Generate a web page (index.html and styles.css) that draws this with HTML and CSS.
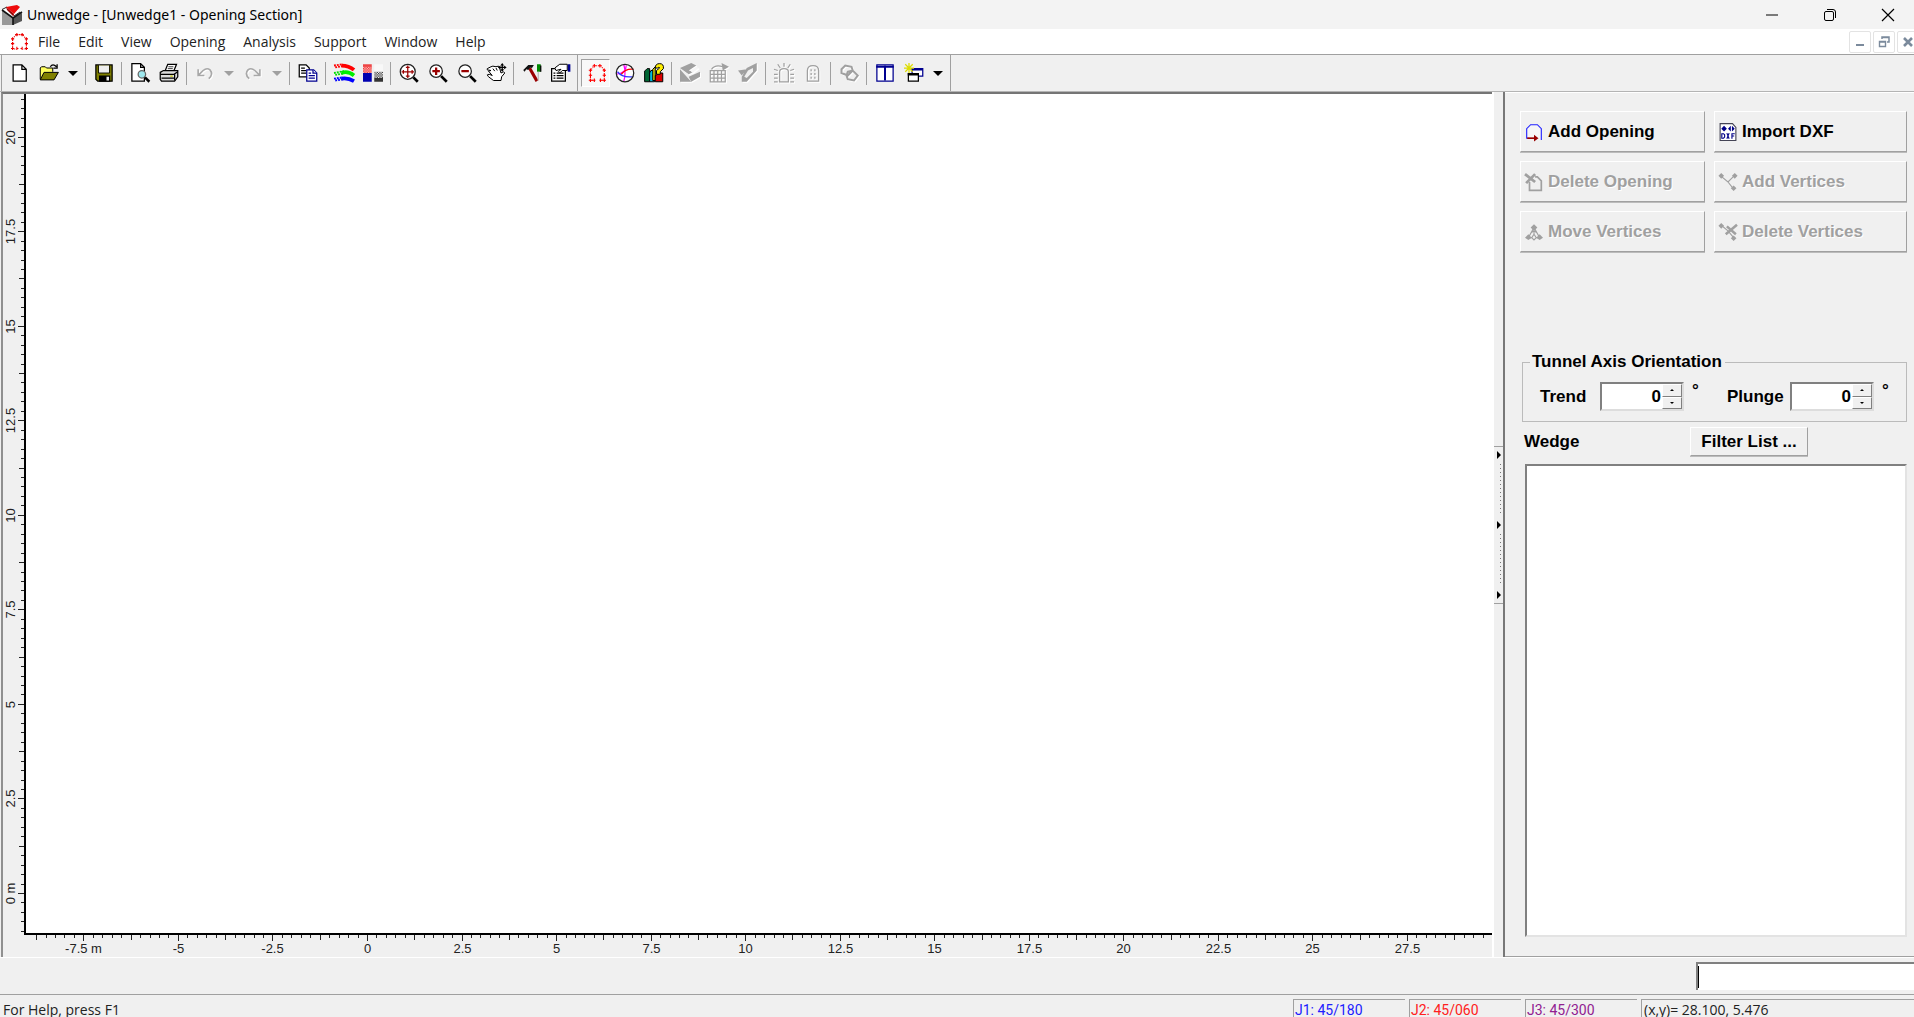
FILE: index.html
```html
<!DOCTYPE html>
<html lang="en">
<head>
<meta charset="utf-8">
<title>Unwedge - [Unwedge1 - Opening Section]</title>
<link rel="stylesheet" href="styles.css">
</head>
<body>
<header class="titlebar">
  <svg class="app-icon" viewBox="0 0 20 20"><path d="M0 5l11 8v7H0z" fill="#999"/><path d="M11 13l9-5v8l-9 4z" fill="#555"/><path d="M0 4l6-3 13 5-8 7z" fill="#fff"/><path d="M0 5l11 8 9-6M11 13v7" fill="none" stroke="#111" stroke-width="1.600"/><path d="M0 4.500l5-2.500M12 11l6-4" stroke="#222"/><path d="M4 2L15 0l3 2-6 7z" fill="#ee0a0a"/><path d="M4 2l8 7-.5 2.500L5 5z" fill="#900"/></svg>
  <h1 class="title">Unwedge - [Unwedge1 - Opening Section]</h1>
  <div class="window-buttons">
    <button aria-label="Minimize"><svg viewBox="0 0 12 12"><path d="M0 6h12" stroke="#000"/></svg></button>
    <button aria-label="Restore"><svg viewBox="0 0 12 12" fill="none" stroke="#000"><rect x=".5" y="2.500" width="9" height="9" rx="1.500"/><path d="M3 .5h6a2.500 2.500 0 0 1 2.500 2.500v6"/></svg></button>
    <button aria-label="Close"><svg viewBox="0 0 12 12"><path d="M0 0l12 12M12 0L0 12" stroke="#000" stroke-width="1.200"/></svg></button>
  </div>
</header>

<nav class="menubar">
  <svg class="doc-icon" viewBox="0 0 16 16"><g fill="none" stroke="#e00" stroke-width="1"><path d="M4 15H1.500V6L4.500 1.500h6.500L14.500 6v9H12" stroke-dasharray="1 1"/></g><path d="M4 1.500h3M9 1.500h3M5.500 0v3M10.500 0v3M0 5.500h3M1.500 4v3M13 5.500h3M14.500 4v3M0 10h3M1.500 8.500v3M13 10h3M14.500 8.500v3M0 14.500h3M1.500 13v3M13 14.500h3M14.500 13v3M5 14.500h2M9 14.500h2M10.500 13v3M5.500 13v3" stroke="#e00"/></svg>
  <button>File</button><button>Edit</button><button>View</button><button>Opening</button><button>Analysis</button><button>Support</button><button>Window</button><button>Help</button>
  <div class="mdi-buttons">
    <button aria-label="Minimize document"><svg viewBox="0 0 12 12"><path d="M2 9h8" stroke="#7b8a9c" stroke-width="2"/></svg></button>
    <button aria-label="Restore document"><svg viewBox="0 0 12 12" fill="none" stroke="#7b8a9c"><path d="M4 3V1h7v5H9M4 1.500h7" stroke-width="1.500"/><path d="M1.500 5.500h6v5h-6zM1 6h7" stroke-width="1.400"/></svg></button>
    <button aria-label="Close document"><svg viewBox="0 0 12 12"><path d="M2 2l8 8M10 2l-8 8" stroke="#7b8a9c" stroke-width="2.600"/></svg></button>
  </div>
</nav>

<div class="toolbars">
  <div class="toolbar">
    <button class="tool" aria-label="New"><svg viewBox="0 0 16 16"><path d="M2.500 1.500h7l3.500 3.500v9.500H2.500zM9.500 1.500V5H13" fill="#fff" stroke="#000"/></svg></button>
    <button class="tool" aria-label="Open"><svg viewBox="0 0 16 16"><path d="M1 13V4l1-1h3l1 1h5v3" fill="#ffff60" stroke="#000" stroke-width=".8"/><path d="M1 13.500L4 7.500h11.500L12 13.500z" fill="#808000" stroke="#000" stroke-width=".8"/><path d="M9 3q2-3 5 0M14.500 1v3h-3" fill="none" stroke="#000"/></svg></button>
    <button class="drop" aria-label="Recent files"></button>
    <i class="sep"></i>
    <button class="tool" aria-label="Save"><svg viewBox="0 0 16 16"><path d="M1.500 1.500h13v13H3L1.500 13z" fill="#808000" stroke="#000"/><path d="M4 2h8v6H4z" fill="#eee"/><path d="M4 10h9v5H4z" fill="#000"/><path d="M10 11h2v3h-2z" fill="#eee"/><path d="M3.500 2v6h9V2" fill="none" stroke="#000" stroke-width=".7"/></svg></button>
    <i class="sep"></i>
    <button class="tool" aria-label="Print preview"><svg viewBox="0 0 16 16"><path d="M1.500 .5h7l3 3v11h-10zM8.500 .5v3h3" fill="#fff" stroke="#000"/><circle cx="9.500" cy="9" r="3" fill="#9ee8ee" stroke="#666"/><path d="M12 11.500l3.500 3.500" stroke="#000" stroke-width="2"/></svg></button>
    <button class="tool" aria-label="Print"><svg viewBox="0 0 16 16"><path d="M5 6l2-5h7l-2 5" fill="#fff" stroke="#000"/><path d="M7.500 3h4M7 4.500h4" stroke="#000" stroke-width=".6"/><path d="M1 7.500L3.500 6H15v5l-2.500 3.500H2L1 13z" fill="#ddd" stroke="#000"/><path d="M1 9h11l3-2M12.500 9v5M2 12h10" fill="none" stroke="#000"/><path d="M9 10.500h2" stroke="#cc0"/></svg></button>
    <i class="sep"></i>
    <button class="tool" aria-label="Undo" disabled><svg viewBox="0 0 16 16" fill="none" stroke="#a8a8a8"><path d="M2.500 5v5h5M3 9.500L6.500 6q3-2.500 5.500-.5 3 3.500-1 7" stroke-width="1.300"/></svg></button>
    <button class="drop off" aria-label="Undo list" disabled></button>
    <button class="tool" aria-label="Redo" disabled><svg viewBox="0 0 16 16" fill="none" stroke="#a8a8a8"><path d="M13.500 5v5h-5M13 9.500L9.500 6Q6.500 3.500 4 5.500q-3 3.500 1 7" stroke-width="1.300"/></svg></button>
    <button class="drop off" aria-label="Redo list" disabled></button>
    <i class="sep"></i>
    <button class="tool" aria-label="Copy"><svg viewBox="0 0 16 16" fill="#fff"><path d="M1 1.500h5.500L9 4v7H1z" stroke="#000"/><path d="M2.500 4h3M2.500 6h4M2.500 8h4" stroke="#000"/><path d="M7 5.500h5.500L15 8v6.500H7z" stroke="#000090"/><path d="M12 5.500V8h3M8.500 8h2M8.500 10h5M8.500 12h5" stroke="#000090"/></svg></button>
    <i class="sep"></i>
    <button class="tool" aria-label="Contours"><svg viewBox="0 0 16 16" fill="none" stroke-width="3"><path d="M6 2q6 0 10 3.500" stroke="red"/><path d="M6 8q5-2 10 2" stroke="#0e0"/><path d="M6 12.500q5-1 10 2" stroke="#00f"/><g stroke-width="1.500" stroke-dasharray="1.500 .8"><path d="M0 2l7-1M1 3.500l6-1" stroke="red"/><path d="M0 8l8-1.500M1 9.500l6-1" stroke="#0d0"/><path d="M0 12.500l7-1M1 14l6-1" stroke="#00f"/></g></svg></button>
    <button class="tool" aria-label="Display colors"><svg viewBox="0 0 16 16"><defs><pattern id="rb" width="2" height="2" patternUnits="userSpaceOnUse"><path fill="#e33" d="M0 0h2v2H0z"/><path fill="#fbb" d="M1 0h1v1H1zM0 1h1v1H0z"/></pattern><pattern id="bw" width="2" height="2" patternUnits="userSpaceOnUse"><path fill="#fff" d="M0 0h2v2H0z"/><path fill="#333" d="M0 0h1v1H0zM1 1h1v1H1z"/></pattern></defs><path fill="#e44" d="M0 1h7v3H0z"/><path fill="url(#rb)" d="M0 3h7v5H0z"/><path fill="#0000b0" d="M0 8h7v7H0z"/><path fill="#f8f8f8" d="M9 1h7v6H9z"/><path fill="url(#bw)" d="M9 7h7v5H9z"/><path fill="#333" d="M9 12h7v3H9z"/></svg></button>
    <i class="sep"></i>
    <button class="tool" aria-label="Zoom all"><svg viewBox="0 0 16 16"><circle cx="7" cy="7" r="6" fill="#fff" stroke="#222"/><path d="M2 7h10M7 2v10M3.500 5.500v3M10.500 5.500v3M5.500 3.500h3M5.500 10.500h3" stroke="#900"/><path d="M11.500 11.500L15 15" stroke="#000" stroke-width="2.200"/></svg></button>
    <button class="tool" aria-label="Zoom in"><svg viewBox="0 0 16 16"><circle cx="6.500" cy="6.500" r="5" fill="#fff" stroke="#222"/><path d="M3.500 6.500h6M6.500 3.500v6" stroke="#900" stroke-width="1.800"/><path d="M10.500 10.500L15 15" stroke="#000" stroke-width="2.200"/></svg></button>
    <button class="tool" aria-label="Zoom out"><svg viewBox="0 0 16 16"><circle cx="6.500" cy="6.500" r="5" fill="#fff" stroke="#222"/><path d="M3.500 6.500h6" stroke="#900" stroke-width="1.800"/><path d="M10.500 10.500L15 15" stroke="#000" stroke-width="2.200"/></svg></button>
    <button class="tool" aria-label="Pan"><svg viewBox="0 0 16 16"><path d="M1 4.500l3-1.500 1.500-.5L8 3l2-.5 1 2L12 8l2-1 1 1-2.500 3-.5 3H6l-4-3-1-1.500 1.500-.5L5 10 2 6.500l2-.5-3-.5z" fill="#fff" stroke="#000" stroke-width=".8"/><path d="M5.500 4.500l1.500 2M8 4l1 2" stroke="#000" stroke-width=".8"/><path d="M13 1v5M10.500 3.500h5" stroke="#000"/><path d="M13 0l1.500 2h-3zM13 7l1.500-2h-3zM16.500 3.500l-2-1.500v3zM9.500 3.500l2-1.500v3z"/></svg></button>
    <i class="sep"></i>
    <button class="tool" aria-label="Project settings"><svg viewBox="0 0 16 16"><path d="M6 4l6 10.500" stroke="#900" stroke-width="2.500"/><path d="M1 5.500L5 1.500h4.500L8 4 6.500 3.500 5 5.500 3.500 5 2 7z" fill="#111"/><path d="M13.500 1v6" stroke="#080" stroke-width="3"/><path d="M13 7v7" stroke="#bbb"/><path d="M15 2v5" stroke="#000"/></svg></button>
    <button class="tool" aria-label="Properties"><svg viewBox="0 0 16 16"><path d="M.5 4.500h11v10H.5z" fill="#fff" stroke="#000"/><path d="M2 8h1.500M4.500 8H10M2 10h1.500M4.500 10H10M2 12h1.500M4.500 12H10" stroke="#000"/><path d="M3 4l4-3h6v5H9L7 8 6 7l2-2-4 1z" fill="#fff" stroke="#000" stroke-width=".8"/><path d="M14.500 1v6" stroke="#000090" stroke-width="2"/></svg></button>
  </div>
  <div class="toolbar">
    <button class="tool pressed" aria-label="Opening section view"><svg viewBox="-2 -1 18 18"><path d="M4 14.500H2V6L5 1.500h6.500L14.500 6v8.500H12" fill="none" stroke="red" stroke-dasharray="1 1"/><path d="M4 1.500h3M9 1.500h3M5.500 0v3M10.500 0v3M.5 5.500h3M2 4v3M13 5.500h3M14.500 4v3M.5 10h3M2 8.500v3M13 10h3M14.500 8.500v3M.5 14.500h6M2 13v3M10 14.500h6M14.500 13v3M5.500 13v3M11 13v3" stroke="red"/></svg></button>
    <button class="tool" aria-label="Stereonet view"><svg viewBox="0 0 16 16"><circle cx="8" cy="8" r="7" fill="#fff"/><path d="M7 1q2 7 0 14M1 9q8-1 8-7" fill="none" stroke="#f0f"/><path d="M15 5Q9 4 5 9" fill="none" stroke="red"/><path d="M2 7q4 5 12 4" fill="none" stroke="#33f"/><circle cx="8" cy="8" r="7" fill="none" stroke="#222"/></svg></button>
    <button class="tool" aria-label="Info viewer"><svg viewBox="0 0 16 16" stroke="#000" stroke-width=".8"><path d="M.5 6.500l2-2h2V15h-4z" fill="#063"/><path d="M4.500 8l1-2h3v9h-4z" fill="#0bd"/><path d="M7 5l2-2v11H7z" fill="#dd0"/><path d="M9 10l4-2h2v7H9z" fill="#d00"/><path d="M9 4q0-3.500 3.500-3.500t3 4L13 7v2h-3V6l2.500-2q-.5-1.500-1.500 0z" fill="#fe0"/></svg></button>
    <i class="sep"></i>
    <button class="tool" aria-label="3D wedge view" disabled><svg viewBox="0 0 16 16" class="dim"><path d="M0 5l9 10H0zM0 4l9-4 4 2-6 4 4 1-4 2zM7 11l9-4v4l-7 4z"/><path d="M8 6l5-3 2 1-5 4z" fill="#f6f6f6"/></svg></button>
    <button class="tool" aria-label="Multi perspective" disabled><svg viewBox="0 0 16 16" class="dim"><path d="M1 6h12v9H1z" fill="none" stroke="#a0a0a0"/><path d="M1 9h12M1 12h12M4 6v9M7 6v9M10 6v9M2 5q3-4 9-2" fill="none" stroke="#a0a0a0"/><path d="M10 0l6 3-5 3z"/></svg></button>
    <button class="tool" aria-label="Perimeter support" disabled><svg viewBox="0 0 16 16" class="dim"><path d="M7 4l8-4v6l-8 9H3V11zM0 6l7-1-4 5z"/><path d="M8 6l4-2v3l-5 5-2-1z" fill="#f0f0f0"/></svg></button>
    <i class="sep"></i>
    <button class="tool" aria-label="Add bolts" disabled><svg viewBox="0 0 16 16" fill="none" stroke="#a0a0a0"><path d="M4.500 15V7q0-2.500 3.500-2.500T11.500 7v8zM8 0v3M3 1l2 3M13 1l-2 3M0 5l3 1M16 5l-3 1M0 9h3M13 9h3M0 12h3M13 12h3M0 15h3M13 15h3"/></svg></button>
    <button class="tool" aria-label="Add shotcrete" disabled><svg viewBox="0 0 16 16" fill="none" stroke="#a0a0a0"><path d="M3.500 14.500V6q0-4 4.500-4t4.500 4v8.500z"/><path d="M6.500 5v9M9.500 5v9" stroke-dasharray="1.500 1.500"/></svg></button>
    <i class="sep"></i>
    <button class="tool" aria-label="Compute" disabled><svg viewBox="0 0 16 16" fill="none" stroke="#a0a0a0" stroke-width="1.600"><path d="M2 5l3-3 5 1 1 3-4 4-5-2zM7 7l4-1 4 4-3 4-5-1-1-3z"/></svg></button>
    <i class="sep"></i>
    <button class="tool" aria-label="Tile windows"><svg viewBox="0 0 16 16"><path d="M1.500 1.500h13v13h-13z" fill="#fff" stroke="#000090"/><path d="M1 3h14M8 2v12" stroke="#000090" stroke-width="1.600"/></svg></button>
    <button class="tool" aria-label="New window"><svg viewBox="0 0 16 16"><path d="M6.500 4.500H15v6H6.500z" fill="#fff" stroke="#000090"/><path d="M6 5h9" stroke="#000090" stroke-width="2"/><path d="M3.500 8.500h8v6h-8z" fill="#fff" stroke="#000"/><path d="M3 9h9" stroke="#000" stroke-width="2"/><path d="M4 0v8M0 4h8M1 1l6 6M7 1L1 7" stroke="#dd0"/></svg></button>
    <button class="drop" aria-label="Window list"></button>
  </div>
</div>

<main class="workspace">
  <section class="document" aria-label="Opening Section">
    <svg class="ruler-y" id="ruler-y"></svg>
    <div class="canvas"></div>
    <svg class="ruler-x" id="ruler-x"></svg>
  </section>
  <div class="splitter">
    <div class="grip"><b></b><i></i><b></b><i></i><b></b></div>
  </div>
  <aside class="panel">
    <div class="actions">
      <button><svg viewBox="0 0 16 16"><path d="M3 13.500H1.500V5L5 1.500h6L14.500 5v10" fill="#f6f6f6" stroke="#22f"/><path d="M2 13.500h7" stroke="#900" stroke-width="1.500"/><path d="M8 10.500l4 3-4 3z" fill="#900"/></svg>Add Opening</button>
      <button><svg viewBox="0 0 16 16"><path d="M1 .5h11L15 4v11.500H1z" fill="#fff" stroke="#445"/><path d="M2 5l2.500-2.500v5zM14 5l-2.500-2.500v5zM7 5L4.500 2.500v5zM8 5l2.500-2.500v5z" fill="#008"/><path d="M2.500 9.500v4h1.500l1-1v-2l-1-1zM7 9l2 5M9 9l-2 5M11.500 14V9.500H14M11.500 11.500h2" fill="none" stroke="#008"/></svg>Import DXF</button>
      <button disabled><svg viewBox="0 0 16 16" fill="none" stroke="#a0a0a0"><path d="M4 8v7.500h10.500V7L11 3.500H9" stroke-width="1.500"/><path d="M0 1l9 7M9 1L1 9" stroke-width="2.500"/></svg>Delete Opening</button>
      <button disabled><svg viewBox="0 0 16 16" class="dim"><path d="M2 3l6 5 5-5M8 8l4 5" fill="none" stroke="#a0a0a0"/><path d="M2 0l2.500 2.500L2 5-.5 2.500zM14 0l2.500 2.500L14 5l-2.500-2.500zM13 11l2.500 2.500L13 16l-2.500-2.500z"/></svg>Add Vertices</button>
      <button disabled><svg viewBox="0 0 16 16" class="dim"><path d="M8 4L3 13M8 4l5 9M8 4v7M5 9l3-2 3 2M3 13h3M10 13h3M8 10l2 3-2 2-2-2z" fill="none" stroke="#a0a0a0"/><path d="M8 1l3 3-3 3-3-3zM3 10l3 3-3 2-3-2zM13 10l3 3-3 2-3-2z"/></svg>Move Vertices</button>
      <button disabled><svg viewBox="0 0 16 16" class="dim"><path d="M2 2l6 5 5 6" fill="none" stroke="#a0a0a0"/><path d="M7 3l8 7M16 1.500L6 10" fill="none" stroke="#a0a0a0" stroke-width="2.200"/><path d="M2 0l2.500 2.500L2 5-.5 2.500zM13 11l2.500 2.500L13 16l-2.500-2.500z"/></svg>Delete Vertices</button>
    </div>
    <fieldset class="orientation">
      <legend>Tunnel Axis Orientation</legend>
      <label for="trend">Trend</label>
      <div class="spin"><input id="trend" value="0"><div><button aria-label="Increase trend"></button><button class="down" aria-label="Decrease trend"></button></div></div>
      <span class="deg">°</span>
      <label for="plunge">Plunge</label>
      <div class="spin"><input id="plunge" value="0"><div><button aria-label="Increase plunge"></button><button class="down" aria-label="Decrease plunge"></button></div></div>
      <span class="deg">°</span>
    </fieldset>
    <div class="wedge-head"><label for="wedges">Wedge</label><button>Filter List ...</button></div>
    <select class="wedges" id="wedges" multiple></select>
  </aside>
</main>

<div class="command"><div class="prompt"><input aria-label="Command prompt" autofocus></div></div>

<footer class="status">
  <span class="help">For Help, press F1</span>
  <span class="pane joint j1">J1: 45/180</span>
  <span class="pane joint j2">J2: 45/060</span>
  <span class="pane joint j3">J3: 45/300</span>
  <span class="pane coords">(x,y)= 28.100, 5.476</span>
</footer>
<script src="rulers.js"></script>
</body>
</html>
```

FILE: styles.css
```css
* { box-sizing: border-box; }
html, body { height: 100%; }
body {
  margin: 0;
  display: grid;
  grid-template-rows: 29px 25px 38px minmax(0, 1fr) 36px 23px;
  overflow: hidden;
  background: #f0f0f0;
  color: #000;
  font: 14px/20px "Open Sans", "Noto Sans", sans-serif;
}
button {
  margin: 0;
  padding: 0;
  border: 0;
  background: none;
  color: inherit;
  font: inherit;
}
svg { display: block; overflow: visible; }

.titlebar { display: flex; align-items: center; padding-left: 2px; background: #f3f3f3; }
.app-icon { width: 20px; height: 20px; }
.title { margin: 0 auto 0 5px; font: 14px/20px "Noto Sans", sans-serif; }
.window-buttons { display: flex; margin-right: -3px; }
.window-buttons button { width: 58px; height: 29px; display: grid; place-items: center; }
.window-buttons svg { width: 12px; height: 12px; }

.menubar { display: flex; align-items: center; padding-left: 11px; background: #fff; color: #222; }
.doc-icon { width: 17px; height: 17px; margin-right: 1px; }
.menubar > button { padding: 0 9px; }
.mdi-buttons { display: flex; gap: 2px; margin: 0 -5px 0 auto; }
.mdi-buttons button { width: 22px; height: 22px; display: grid; place-items: center; border: 1px solid #e3e3e3; border-radius: 2px; }
.mdi-buttons svg { width: 12px; height: 12px; }

.toolbars { display: flex; border-top: 1px solid #a0a0a0; border-bottom: 1px solid #b4b4b4; }
.toolbar { display: flex; align-items: center; padding: 0 3px; border-right: 1px solid #a0a0a0; }
.toolbar:first-child { margin-left: 1px; padding-right: 2px; border-left: 1px solid #a0a0a0; }
.tool { width: 29px; height: 28px; display: grid; place-items: center; border: 1px solid transparent; }
.tool svg { width: 20px; height: 20px; }
.pressed { border-color: #a0a0a0 #fff #fff #a0a0a0; background: #f8f8f8; }
.dim { fill: #a0a0a0; }
.tool:disabled svg { filter: drop-shadow(1px 1px 0 #fff); }
.sep { width: 1px; height: 23px; margin: 0 3px; background: #a0a0a0; }
.drop { width: 19px; height: 28px; display: grid; place-items: center; }
.drop::before { content: ""; border: 5px solid transparent; border-top-color: #000; border-bottom: 0; }
.off::before { border-top-color: #a0a0a0; }

.workspace { display: flex; min-height: 0; border-bottom: 1px solid #fff; }
.document {
  flex: 1;
  min-width: 0;
  display: grid;
  grid-template: minmax(0, 1fr) 22px / 21px minmax(0, 1fr);
  margin-left: 1px;
  border-top: 2px solid #757575;
  border-left: 2px solid #909090;
}
.canvas { background: #fff; border-left: 2px solid #000; border-bottom: 2px solid #000; }
.ruler-y { width: 21px; height: 100%; }
.ruler-x { grid-column: 2; width: 100%; height: 22px; overflow: hidden; }
.ruler-y path, .ruler-x path { stroke: #222; fill: none; shape-rendering: crispEdges; }
.ruler-y text, .ruler-x text { font: 13px "Liberation Sans", sans-serif; fill: #222; text-anchor: middle; }

.splitter { width: 13px; display: flex; align-items: center; border-left: 2px solid #fff; border-right: 2px solid #787878; }
.grip { width: 100%; height: 158px; display: flex; flex-direction: column; align-items: center; justify-content: space-between; padding: 4px 0; border-top: 1px solid #a0a0a0; border-bottom: 1px solid #a0a0a0; }
.grip b { border: 4px solid transparent; border-left-color: #000; border-right: 0; }
.grip i { width: 1px; height: 52px; margin-left: 3px; background: repeating-linear-gradient(#777 0 1px, transparent 1px 4px); }

.panel {
  width: 409px;
  display: flex;
  flex-direction: column;
  padding: 18px 7px 19px 15px;
  border-top: 1px solid #fff;
  border-bottom: 1px solid #a0a0a0;
  font: bold 17px/20px "Liberation Sans", sans-serif;
}
.actions { display: grid; grid-template-columns: 185fr 193fr; gap: 9px; }
.actions button, .wedge-head button { border: 1px solid; border-color: #fff #a0a0a0 #a0a0a0 #fff; box-shadow: 0 1px #bbb; }
.actions button { height: 41px; display: flex; align-items: center; gap: 5px; padding-left: 4px; }
.actions svg { width: 18px; height: 18px; }
.actions button:disabled { color: #a0a0a0; text-shadow: 1px 1px #fff; }

.orientation {
  height: 70px;
  margin: 100px 0 0 2px;
  padding: 0 0 0 17px;
  display: flex;
  border: 1px solid #bbb;
}
.orientation legend { margin-left: -10px; padding: 0 3px 0 2px; }
.orientation label { width: 60px; padding-top: 15px; }
.orientation label ~ label { width: 63px; }
.spin { width: 84px; height: 29px; display: flex; margin-top: 10px; background: #fff; border: 2px solid; border-color: #808080 #ddd #ddd #808080; }
.spin input { width: 60px; padding: 0 1px 0 0; border: 0; background: none; font: inherit; text-align: right; outline: 0; }
.spin div { width: 20px; display: grid; grid-template-rows: 1fr 1fr; }
.spin button { display: grid; place-items: center; background: #f0f0f0; border: 1px solid; border-color: #fff #808080 #808080 #fff; }
.spin button::before { content: ""; border: 2px solid transparent; border-bottom-color: #000; border-top: 0; }
.spin .down::before { border: 2px solid transparent; border-top-color: #000; border-bottom: 0; }
.deg { width: 43px; padding: 9px 0 0 8px; }
.deg:last-child { width: 20px; }

.wedge-head { display: flex; justify-content: space-between; padding: 5px 99px 0 4px; }
.wedge-head label { padding-top: 5px; }
.wedge-head button { width: 118px; height: 29px; }
.wedges { flex: 1; min-height: 0; width: auto; margin: 8px 0 0 5px; background: #fff; border: 2px solid; border-color: #808080 #e3e3e3 #e3e3e3 #808080; border-radius: 0; outline: 0; }

.command { display: flex; justify-content: flex-end; padding-top: 4px; }
.prompt { width: 218px; height: 28px; background: #fff; border: solid #808080; border-width: 2px 0 0 2px; }
.prompt input { width: 100%; height: 22px; margin-top: 2px; padding: 0; border: 0; border-left: 1px solid #000; outline: 0; caret-color: transparent; font: inherit; }

.status { display: flex; gap: 4px; height: 28px; padding-top: 4px; border-top: 1px solid #a0a0a0; color: #222; }
.help { flex: 1; padding-left: 3px; line-height: 22px; }
.pane { width: 112px; padding-left: 1px; border-top: 1px solid #a0a0a0; border-left: 1px solid #a0a0a0; line-height: 20px; }
.joint { font-family: Roboto, sans-serif; }
.j1 { color: #2020ff; }
.j2 { color: #ff2020; }
.j3 { color: #902090; }
.coords { width: 273px; padding-left: 2px; }
```

FILE: rulers.js
```js
// Metric rulers along the left and bottom edges of the section view.
const STEP = 94.54 / 10; // pixels per 0.25 m
const ORIGIN_X = 343;    // distance of x = 0 from the left edge
const ORIGIN_Y = 42;     // distance of y = 0 from the bottom edge

function label(x, y, text, turned) {
  const turn = turned ? ` transform="rotate(-90 ${x} ${y})"` : "";
  return `<text x="${x}" y="${y}"${turn}>${text}</text>`;
}

function tickLength(i) {
  return i % 10 === 0 ? 6 : i % 5 === 0 ? 5 : 3;
}

function draw() {
  const rx = document.getElementById("ruler-x");
  const ry = document.getElementById("ruler-y");
  const width = rx.getBoundingClientRect().width;
  const height = ry.getBoundingClientRect().height;

  let path = "", texts = "";
  for (let i = Math.ceil((3 - ORIGIN_X) / STEP); ORIGIN_X + i * STEP < width - 4; i++) {
    const x = Math.round(ORIGIN_X + i * STEP) + 0.5;
    path += `M${x} 0v${tickLength(i)}`;
    if (i % 10 === 0) texts += label(x, 18, i / 4 + (i === -30 ? " m" : ""));
  }
  rx.innerHTML = `<path d="${path}"/>${texts}`;

  path = ""; texts = "";
  for (let i = Math.ceil((3 - ORIGIN_Y) / STEP); ORIGIN_Y + i * STEP < height - 4; i++) {
    const y = Math.round(height - ORIGIN_Y - i * STEP) + 0.5;
    path += `M21 ${y}h${-tickLength(i)}`;
    if (i % 10 === 0) texts += label(12, y, i / 4 + (i === 0 ? " m" : ""), true);
  }
  ry.innerHTML = `<path d="${path}"/>${texts}`;
}

draw();
window.addEventListener("resize", draw);
```
